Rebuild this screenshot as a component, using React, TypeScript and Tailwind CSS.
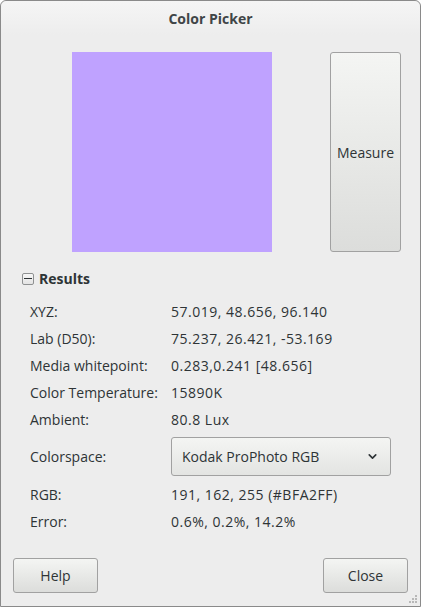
import { ChevronDown } from "lucide-react";

const rows: [string, string][] = [
  ["XYZ:", "57.019, 48.656, 96.140"],
  ["Lab (D50):", "75.237, 26.421, -53.169"],
  ["Media whitepoint:", "0.283,0.241 [48.656]"],
  ["Color Temperature:", "15890K"],
  ["Ambient:", "80.8 Lux"],
];

const tail: [string, string][] = [
  ["RGB:", "191, 162, 255 (#BFA2FF)"],
  ["Error:", "0.6%, 0.2%, 14.2%"],
];

const btn =
  "rounded-[3px] border border-[#a1a1a1] bg-gradient-to-b from-[#f4f5f3] to-[#dcdddb] text-[#2e3436]";

function Row({ label, value }: { label: string; value: string }) {
  return (
    <div className="flex h-[27px] items-center">
      <span className="w-[141px] shrink-0">{label}</span>
      <span className="tracking-[0.5px]">{value}</span>
    </div>
  );
}

export default function App() {
  return (
    <div
      className="relative flex h-[607px] w-[421px] flex-col rounded-t-[6px] border border-[#8a8a8a] bg-[#ededed] text-[14px] text-[#2e3436]"
      style={{ fontFamily: '"Open Sans", sans-serif' }}
    >
      <div className="flex h-[34px] shrink-0 items-center justify-center rounded-t-[6px] bg-gradient-to-b from-[#f5f5f5] to-[#ededed] font-bold text-[#404547]">
        Color Picker
      </div>

      <div className="mt-[17px] flex pl-[71px]">
        <div className="h-[200px] w-[200px] bg-[#bfa2ff]" />
        <button className={`ml-[58px] h-[200px] w-[71px] ${btn}`}>Measure</button>
      </div>

      <div className="mt-[16px] flex items-center pl-[21px]">
        <span className="mr-[5px] flex h-[12px] w-[12px] items-center justify-center rounded-[2px] border border-[#8f9192] bg-gradient-to-b from-[#f6f6f6] to-[#e4e4e4]">
          <span className="h-px w-[8px] bg-[#2e3436]" />
        </span>
        <span className="font-bold">Results</span>
      </div>

      <div className="mt-[9px] pl-[29px]">
        {rows.map(([l, v]) => (
          <Row key={l} label={l} value={v} />
        ))}
        <div className="mt-[4px] flex h-[39px] items-center">
          <span className="w-[141px] shrink-0">Colorspace:</span>
          <div
            className={`flex h-[39px] w-[220px] items-center justify-between pl-[10px] pr-[11px] ${btn} from-[#f1f1ef] to-[#e3e4e2]`}
          >
            <span>Kodak ProPhoto RGB</span>
            <ChevronDown size={13} strokeWidth={3} />
          </div>
        </div>
        <div className="mt-[5px]">
          {tail.map(([l, v]) => (
            <Row key={l} label={l} value={v} />
          ))}
        </div>
      </div>

      <div className="mt-auto mb-[13px] flex justify-between px-[12px]">
        <button className={`h-[35px] w-[85px] ${btn}`}>Help</button>
        <button className={`h-[35px] w-[85px] ${btn}`}>Close</button>
      </div>

      <svg className="absolute bottom-[2px] right-[2px]" width="10" height="10" viewBox="0 0 10 10">
        {[
          [8, 2],
          [5, 5],
          [8, 5],
          [2, 8],
          [5, 8],
          [8, 8],
        ].map(([x, y]) => (
          <rect key={`${x}-${y}`} x={x - 1} y={y - 1} width="2" height="2" fill="#b8b8b8" />
        ))}
      </svg>
    </div>
  );
}
